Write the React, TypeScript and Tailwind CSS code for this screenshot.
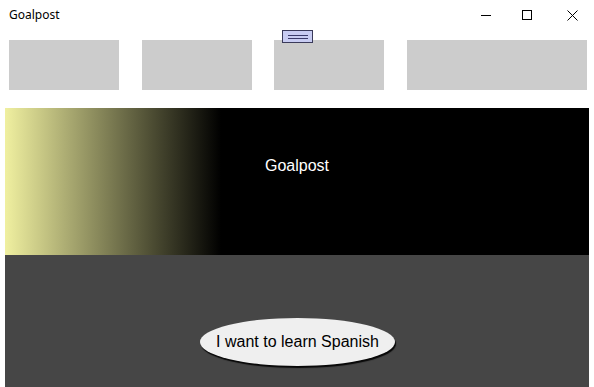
import React from "react";

export default function App() {
  return (
    <div className="relative w-[594px] h-[387px] overflow-hidden bg-white" style={{ fontFamily: '"Liberation Sans", Arial, sans-serif' }}>
      {/* Title bar */}
      <div className="flex h-[30px] items-center">
        <div className="pl-[9px] text-[12px] text-black leading-none" style={{ fontFamily: '"Noto Sans", "Open Sans", sans-serif' }}>
          Goalpost
        </div>
        <div className="ml-auto flex items-center pr-[16px]">
          <svg width="10" height="10" viewBox="0 0 10 10">
            <line x1="0" y1="5.5" x2="10" y2="5.5" stroke="#000" strokeWidth="1" />
          </svg>
          <svg className="ml-[31px]" width="10" height="10" viewBox="0 0 10 10">
            <rect x="0.5" y="0.5" width="9" height="9" fill="none" stroke="#000" strokeWidth="1" />
          </svg>
          <svg className="ml-[35px]" width="11" height="11" viewBox="0 0 11 11">
            <line x1="0.5" y1="0.5" x2="10.5" y2="10.5" stroke="#000" strokeWidth="1" />
            <line x1="10.5" y1="0.5" x2="0.5" y2="10.5" stroke="#000" strokeWidth="1" />
          </svg>
        </div>
      </div>

      {/* Gray boxes row */}
      <div className="mt-[10px] flex h-[50px] pl-[9px]">
        <div className="w-[110px] bg-[#cccccc]" />
        <div className="ml-[23px] w-[110px] bg-[#cccccc]" />
        <div className="ml-[22px] w-[110px] bg-[#cccccc]" />
        <div className="ml-[23px] w-[180px] bg-[#cccccc]" />
      </div>

      {/* small overlay button */}
      <div className="absolute left-[282px] top-[30px] flex h-[13px] w-[31px] flex-col items-center justify-center gap-[2px] border border-[#3a3a5a] bg-[#c8ccf2]">
        <div className="h-px w-[20px] bg-[#3a3a6a]" />
        <div className="h-px w-[20px] bg-[#3a3a6a]" />
      </div>

      {/* Black gradient panel */}
      <div className="mx-[5px] mt-[18px] flex h-[147px] items-start justify-center bg-[linear-gradient(to_right,#f0f0a0_0%,#000000_37%,#000000_100%)]">
        <div className="mt-[48px] text-[16px] leading-[20px] text-white">Goalpost</div>
      </div>

      {/* Dark gray panel */}
      <div className="mx-[5px] flex h-[140px] justify-center bg-[#464646]">
        <div className="mt-[63px] ml-[1px] flex h-[48px] w-[195px] items-center justify-center rounded-[50%] bg-[#efefef] text-[16px] text-black shadow-[1px_2px_1px_rgba(0,0,0,0.9)]">
          I want to learn Spanish
        </div>
      </div>
    </div>
  );
}
